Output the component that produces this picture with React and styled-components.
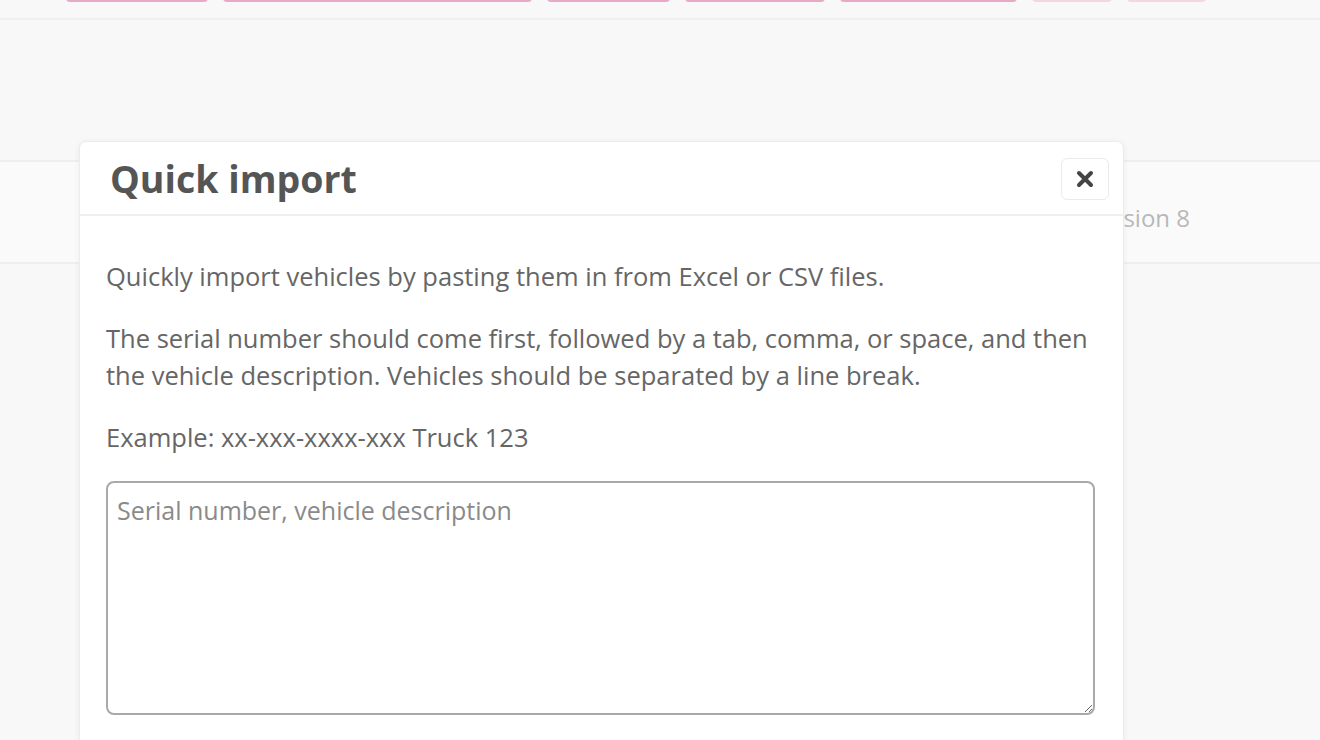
import React from 'react';
import styled, { createGlobalStyle } from 'styled-components';

const GlobalStyle = createGlobalStyle`
  html, body {
    margin: 0;
    padding: 0;
    background: #f8f8f8;
    font-family: "Open Sans", "Noto Sans", sans-serif;
    overflow: hidden;
  }
`;

const Page = styled.div`
  position: relative;
  width: 1320px;
  height: 740px;
  overflow: hidden;
  background: #f8f8f8;
`;

const TagBar = styled.div`
  display: flex;
  gap: 15px;
  padding: 0 0 0 66px;
  margin-top: -28px;
  height: 48px;
  border-bottom: 2px solid #efefef;
  box-sizing: border-box;
`;

const Tag = styled.div`
  width: ${(p) => p.$w}px;
  height: 30px;
  border-radius: 4px;
  background: ${(p) => (p.$faded ? '#fcedf4' : '#f6d3e3')};
  border-bottom: 2px solid ${(p) => (p.$faded ? '#f4d6e4' : '#e6a9c6')};
  box-sizing: border-box;
`;

const Spacer = styled.div`
  height: 140px;
`;

const InfoRow = styled.div`
  height: 104px;
  border-top: 2px solid #efefef;
  border-bottom: 2px solid #efefef;
  box-sizing: border-box;
  display: flex;
  align-items: center;
  justify-content: flex-end;
  padding: 10px 130px 0 0;
  background: #fafafa;
`;

const InfoText = styled.span`
  font-size: 24px;
  color: #b8b8b8;
`;

const Modal = styled.div`
  position: absolute;
  left: 79px;
  top: 141px;
  width: 1045px;
  height: 640px;
  background: #fff;
  border: 1px solid #ececec;
  border-radius: 7px;
  box-shadow: 0 1px 6px rgba(0, 0, 0, 0.06);
  box-sizing: border-box;
`;

const ModalHeader = styled.div`
  height: 74px;
  display: flex;
  align-items: center;
  justify-content: space-between;
  padding: 0 14px 0 30px;
  border-bottom: 2px solid #f0f0f0;
  box-sizing: border-box;
`;

const Title = styled.h2`
  margin: 0;
  font-size: 37.5px;
  font-weight: 700;
  color: #555;
`;

const CloseButton = styled.button`
  width: 48px;
  height: 42px;
  display: flex;
  align-items: center;
  justify-content: center;
  background: #fff;
  border: 1px solid #ebebeb;
  border-radius: 6px;
  padding: 0;
  margin-top: 2px;
  cursor: pointer;
`;

const ModalBody = styled.div`
  padding: 42px 28px 0 26px;
`;

const Paragraph = styled.p`
  margin: 0 0 25px;
  font-size: 25.5px;
  line-height: 37px;
  color: #666;
`;

const TextArea = styled.textarea`
  display: block;
  width: 100%;
  height: 234px;
  box-sizing: border-box;
  padding: 9px 9px;
  border: 2px solid #a9a9a9;
  border-radius: 8px;
  font-family: "Open Sans", "Noto Sans", sans-serif;
  font-size: 25px;
  line-height: 37px;
  color: #555;
  outline: none;
  resize: vertical;

  &::placeholder {
    color: #8a8a8a;
  }
`;

const tags = [
  { w: 142 },
  { w: 309 },
  { w: 123 },
  { w: 140 },
  { w: 177 },
  { w: 80, faded: true },
  { w: 79, faded: true },
];

const CloseIcon = () => (
  <svg width="20" height="20" viewBox="0 0 20 20" aria-hidden="true">
    <path d="M4 4 L16 16 M16 4 L4 16" stroke="#444" strokeWidth="4" strokeLinecap="round" />
  </svg>
);

export default function App() {
  return (
    <Page>
      <GlobalStyle />
      <TagBar>
        {tags.map((t, i) => (
          <Tag key={i} $w={t.w} $faded={t.faded} />
        ))}
      </TagBar>
      <Spacer />
      <InfoRow>
        <InfoText>Version 8</InfoText>
      </InfoRow>

      <Modal>
        <ModalHeader>
          <Title>Quick import</Title>
          <CloseButton aria-label="Close">
            <CloseIcon />
          </CloseButton>
        </ModalHeader>
        <ModalBody>
          <Paragraph>Quickly import vehicles by pasting them in from Excel or CSV files.</Paragraph>
          <Paragraph>
            The serial number should come first, followed by a tab, comma, or space, and then
            the vehicle description. Vehicles should be separated by a line break.
          </Paragraph>
          <Paragraph>Example: xx-xxx-xxxx-xxx Truck 123</Paragraph>
          <TextArea placeholder="Serial number, vehicle description" />
        </ModalBody>
      </Modal>
    </Page>
  );
}
